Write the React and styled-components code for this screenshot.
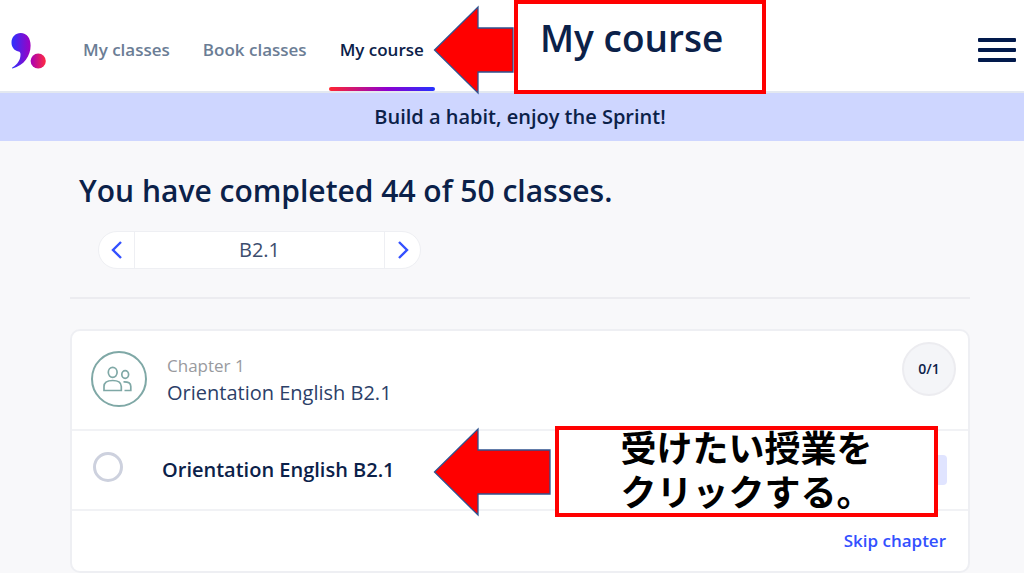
import React from 'react';
import styled, { createGlobalStyle } from 'styled-components';

const NAVY = '#0b2149';
const SLATE = '#6b7d95';
const BLUE = '#3350ff';
const TEAL = '#7fa8a6';
const LINE = '#eeeff3';
const RED = '#ff0000';

const GlobalStyle = createGlobalStyle`
    * {
        box-sizing: border-box;
    }

    body {
        margin: 0;
        background: #f8f8fa;
        color: ${NAVY};
        font-family: 'Open Sans', 'Noto Sans', sans-serif;
    }

    button {
        border: 0;
        padding: 0;
        background: none;
        font: inherit;
        cursor: pointer;
    }
`

const Header = styled.header`
    position: relative;
    display: flex;
    align-items: center;
    height: 93px;
    padding: 0 8px 0 11px;
    background: white;
    border-bottom: 2px solid #e3e8f0;
`

const LogoLink = styled.a`
    display: flex;
    width: 61px;
    padding-top: 10px;
`

const Nav = styled.nav`
    display: flex;
    flex: 1;
    gap: 11px;
    height: 100%;
`

const NavLink = styled.a`
    display: flex;
    flex-direction: column;
    justify-content: center;
    position: relative;
    padding: 9px 11px 0;
    color: ${props => props.$active ? NAVY : SLATE};
    font-size: 17px;
    font-weight: 600;
    line-height: 24px;
    text-decoration: none;

    &::after {
        content: '';
        display: ${props => props.$active ? 'block' : 'none'};
        position: absolute;
        left: 0;
        right: 0;
        bottom: 0;
        height: 4px;
        border-radius: 2px;
        background: linear-gradient(to right, #ff2530, #8d00d0 55%, #2432ff);
    }
`

const MenuButton = styled.button`
    display: flex;
    flex-direction: column;
    gap: 6px;
    width: 38px;
    padding-top: 8px;

    span {
        height: 4px;
        border-radius: 1px;
        background: #021a4c;
    }
`

const Banner = styled.div`
    padding: 12px 0;
    padding-left: 16px;
    background: #ced6ff;
    font-size: 20px;
    font-weight: 600;
    line-height: 24px;
    text-align: center;
`

const Main = styled.main`
    padding: 30px 54px 0 70px;
`

const Title = styled.h1`
    margin: 0;
    padding-left: 9px;
    font-size: 30px;
    font-weight: 600;
    line-height: 40px;
`

const LevelPicker = styled.div`
    display: flex;
    width: 323px;
    height: 38px;
    margin: 20px 0 28px 28px;
    overflow: hidden;
    background: white;
    border: 1px solid ${LINE};
    border-radius: 19px;
`

const LevelStep = styled.button`
    display: flex;
    align-items: center;
    justify-content: center;
    width: 35px;
    color: ${BLUE};
`

const Level = styled.div`
    flex: 1;
    border: solid ${LINE};
    border-width: 0 1px;
    color: #3c4d6d;
    font-size: 20px;
    line-height: 36px;
    text-align: center;
`

const Divider = styled.hr`
    height: 2px;
    margin: 0 0 30px;
    border: 0;
    background: #ececf0;
`

const Card = styled.section`
    background: white;
    border: 2px solid ${LINE};
    border-radius: 10px;
`

const ChapterHead = styled.div`
    display: flex;
    align-items: center;
    gap: 20px;
    height: 98px;
    padding: 0 12px 2px 19px;
`

const ChapterIcon = styled.div`
    display: flex;
    align-items: center;
    justify-content: center;
    width: 56px;
    height: 56px;
    padding: 0 4px 0 0;
    border: 2px solid ${TEAL};
    border-radius: 50%;
    color: ${TEAL};
`

const ChapterText = styled.div`
    flex: 1;
    line-height: 27px;
`

const ChapterNumber = styled.div`
    color: #999a9e;
    font-size: 17px;
`

const ChapterName = styled.div`
    color: #2c4068;
    font-size: 20px;
`

const Progress = styled.div`
    width: 54px;
    height: 54px;
    margin-bottom: 20px;
    background: #f4f5f8;
    border: 2px solid #ececf0;
    border-radius: 50%;
    font-size: 14px;
    font-weight: 600;
    line-height: 50px;
    text-align: center;
`

const Lesson = styled.div`
    position: relative;
    display: flex;
    align-items: center;
    height: 82px;
    padding: 0 21px;
    border: solid #f1f2f5;
    border-width: 2px 0;
`

const LessonLabel = styled.label`
    display: flex;
    flex: 1;
    align-items: center;
    gap: 39px;
    font-size: 20px;
    font-weight: 600;
    line-height: 28px;
`

const LessonCheck = styled.input`
    appearance: none;
    width: 30px;
    height: 30px;
    margin: 0 0 6px;
    border: 3px solid #cdd1de;
    border-radius: 50%;
`

const LessonTag = styled.span`
    width: 64px;
    height: 30px;
    background: #e0e4ff;
    border-radius: 4px;
`

const CardFoot = styled.div`
    display: flex;
    justify-content: flex-end;
    padding: 15px 22px;
`

const SkipButton = styled.button`
    color: ${BLUE};
    font-size: 17px;
    font-weight: 600;
    line-height: 30px;
`

const Note = styled.div`
    position: absolute;
    z-index: 1;
    display: flex;
    align-items: ${props => props.$align};
    left: ${props => props.$left}px;
    top: ${props => props.$top}px;
    gap: ${props => props.$gap}px;
`

const ArrowShape = styled.svg`
    display: block;
    overflow: visible;
`

const CourseBox = styled.div`
    width: 252px;
    height: 94px;
    padding: 10px 0 0 22px;
    background: white;
    border: 4px solid ${RED};
    font-size: 37px;
    font-weight: 600;
    line-height: 48px;
`

const PickBox = styled.div`
    display: flex;
    flex-direction: column;
    justify-content: flex-end;
    width: 383px;
    height: 91px;
    padding-bottom: 1px;
    background: white;
    border: 4px solid ${RED};
    color: black;
    font-family: 'Noto Sans CJK JP', sans-serif;
    font-size: 36px;
    font-weight: 700;
    line-height: 44px;
    text-align: center;
    white-space: nowrap;
`

const Logo = () => (
    <svg width="36" height="36" viewBox="0 0 36 36">
        <defs>
            <linearGradient id="comma" x1="0" x2="1">
                <stop offset="0" stopColor="#2a32ff" />
                <stop offset="1" stopColor="#a000c0" />
            </linearGradient>
            <linearGradient id="dot" x1="0" x2="1">
                <stop offset="0" stopColor="#a800b8" />
                <stop offset="1" stopColor="#ff2a40" />
            </linearGradient>
        </defs>
        <path
            d="M9.7 0C15.8 0 19.6 5 19.6 12.5C19.6 23 13 32.500 1.500 35.500C.9 35.500 .8 34.900 1.300 34.600C7 31 9.500 26.500 9.500 21.500C9.500 19.600 9 18.900 7.500 18.500C3 17.500 .5 14 .5 9.500C.5 4 4.500 0 9.700 0Z"
            fill="url(#comma)"
        />
        <circle cx="27.200" cy="28" r="7.600" fill="url(#dot)" />
    </svg>
)

const PeopleIcon = () => (
    <svg width="30" height="26" viewBox="0 0 30 26" fill="none" stroke="currentColor" strokeWidth="1.7">
        <ellipse cx="10.700" cy="6.300" rx="4.400" ry="5" />
        <ellipse cx="23.200" cy="8.500" rx="3.400" ry="3.800" />
        <path d="M2 24.500V20.500C2 16.500 5.500 14.500 10.700 14.500S19.300 16.500 19.300 20.500V24.500Z" />
        <path d="M21.500 15.800C26.300 15.600 28.800 17.200 28.800 20.500V24.500H22.500" />
    </svg>
)

const Chevron = ({ next }) => (
    <svg width="12" height="18" viewBox="0 0 12 18" fill="none" stroke="currentColor" strokeWidth="2.4">
        <path d={next ? 'M2 1L10 9L2 17' : 'M10 1L2 9L10 17'} />
    </svg>
)

const Arrow = ({ length }) => (
    <ArrowShape width={length} height="88" viewBox={`0 0 ${length} 88`}>
        <path
            d={`M0.500 44L44 1V22H${length - 1}V66H44V87Z`}
            fill={RED}
            stroke="#2f528f"
            strokeWidth="1.3"
        />
    </ArrowShape>
)

const App = () => (
    <>
        <GlobalStyle />
        <Header>
            <LogoLink href="#" aria-label="Home"><Logo /></LogoLink>
            <Nav>
                <NavLink href="#">My classes</NavLink>
                <NavLink href="#">Book classes</NavLink>
                <NavLink href="#" $active>My course</NavLink>
            </Nav>
            <MenuButton aria-label="Menu">
                <span />
                <span />
                <span />
            </MenuButton>
            <Note $left={434} $top={0} $gap={0} $align="flex-end">
                <Arrow length={80} />
                <CourseBox>My course</CourseBox>
            </Note>
        </Header>
        <Banner>Build a habit, enjoy the Sprint!</Banner>
        <Main>
            <Title>You have completed 44 of 50 classes.</Title>
            <LevelPicker>
                <LevelStep aria-label="Previous level"><Chevron /></LevelStep>
                <Level>B2.1</Level>
                <LevelStep aria-label="Next level"><Chevron next /></LevelStep>
            </LevelPicker>
            <Divider />
            <Card>
                <ChapterHead>
                    <ChapterIcon><PeopleIcon /></ChapterIcon>
                    <ChapterText>
                        <ChapterNumber>Chapter 1</ChapterNumber>
                        <ChapterName>Orientation English B2.1</ChapterName>
                    </ChapterText>
                    <Progress>0/1</Progress>
                </ChapterHead>
                <Lesson>
                    <LessonLabel>
                        <LessonCheck type="checkbox" />
                        Orientation English B2.1
                    </LessonLabel>
                    <LessonTag />
                    <Note $left={362} $top={-5} $gap={4} $align="center">
                        <Arrow length={117} />
                        <PickBox>
                            <span>受けたい授業を</span>
                            <span>クリックする。</span>
                        </PickBox>
                    </Note>
                </Lesson>
                <CardFoot>
                    <SkipButton>Skip chapter</SkipButton>
                </CardFoot>
            </Card>
        </Main>
    </>
)

export default App;
